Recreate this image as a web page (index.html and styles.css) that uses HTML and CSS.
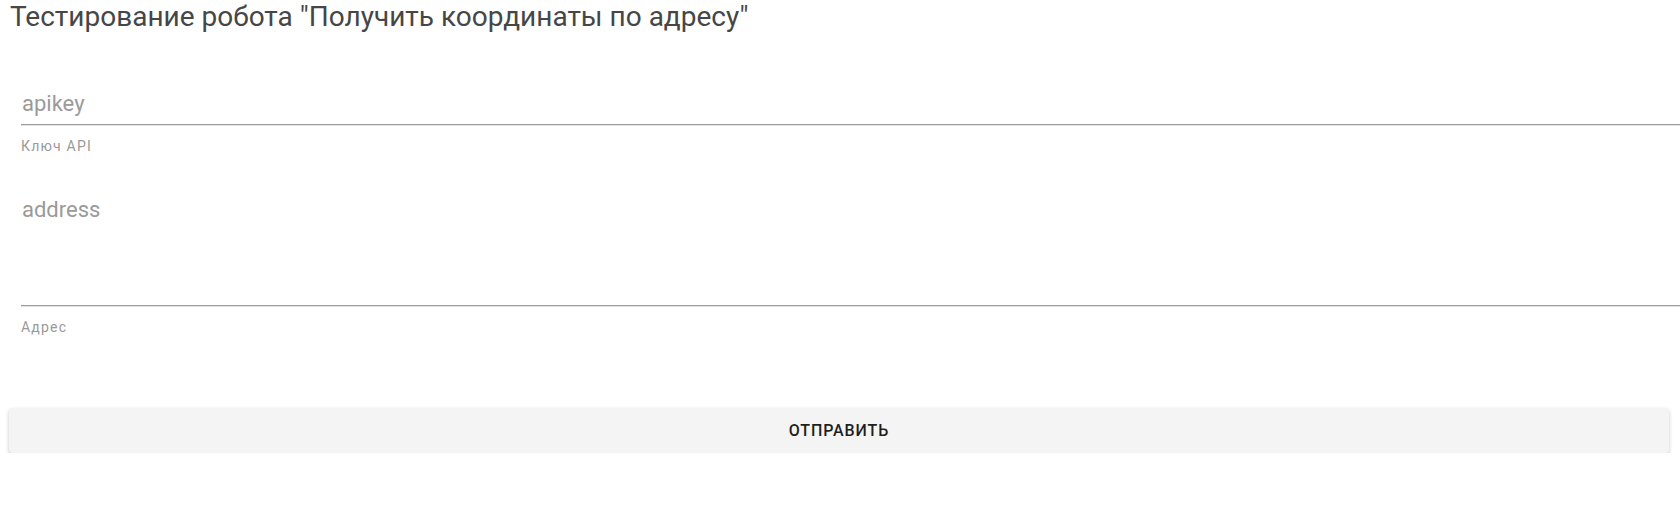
FILE: index.html
```html
<!DOCTYPE html>
<html lang="ru">
<head>
<meta charset="utf-8">
<title>Тестирование робота</title>
<link rel="stylesheet" href="styles.css">
</head>
<body>
<main class="page">
  <h1 class="title">Тестирование робота "Получить координаты по адресу"</h1>
  <form class="form">
    <div class="field field-key">
      <input class="input" type="text" placeholder="apikey">
      <div class="helper">Ключ API</div>
    </div>
    <div class="field field-address">
      <textarea class="input textarea" placeholder="address"></textarea>
      <div class="helper">Адрес</div>
    </div>
    <button class="submit" type="button">Отправить</button>
  </form>
</main>
</body>
</html>
```

FILE: styles.css
```css
html, body {
  margin: 0;
  padding: 0;
  background: #ffffff;
}

.page {
  display: flex;
  flex-direction: column;
  font-family: Roboto, "Noto Sans", sans-serif;
}

.title {
  margin: 0;
  padding-left: 10px;
  font-size: 28px;
  line-height: 33px;
  font-weight: 400;
  color: #464646;
}

.form {
  display: flex;
  flex-direction: column;
}

.field {
  display: flex;
  flex-direction: column;
  margin-left: 21px;
}

.field-key {
  margin-top: 57px;
}

.field-address {
  margin-top: 43px;
}

.input {
  display: block;
  box-sizing: border-box;
  width: 100%;
  margin: 0;
  padding: 0 0 8px 1px;
  height: 35px;
  border: none;
  border-bottom: 1px solid #9e9e9e;
  box-shadow: 0 1px 0 #e2e2e2;
  outline: none;
  background: transparent;
  font-family: Roboto, "Noto Sans", sans-serif;
  font-size: 22px;
  line-height: 26px;
  color: #333;
}

.input::placeholder {
  color: #9a9a9a;
  opacity: 1;
}

.textarea {
  height: 109px;
  padding: 0 0 0 1px;
  resize: none;
  overflow: hidden;
}

.helper {
  margin-top: 13px;
  font-size: 14px;
  line-height: 16px;
  letter-spacing: 1.2px;
  color: #999;
}

.submit {
  margin: 73px 11px 0 9px;
  height: 45px;
  border: none;
  border-radius: 3px;
  background: #f4f4f4;
  box-shadow: 0 2px 4px rgba(0, 0, 0, 0.2), 0 1px 1px rgba(0, 0, 0, 0.06);
  font-family: Roboto, "Noto Sans", sans-serif;
  font-size: 16px;
  font-weight: 500;
  letter-spacing: 0.9px;
  text-transform: uppercase;
  color: #1e1e1e;
  cursor: pointer;
}
```
